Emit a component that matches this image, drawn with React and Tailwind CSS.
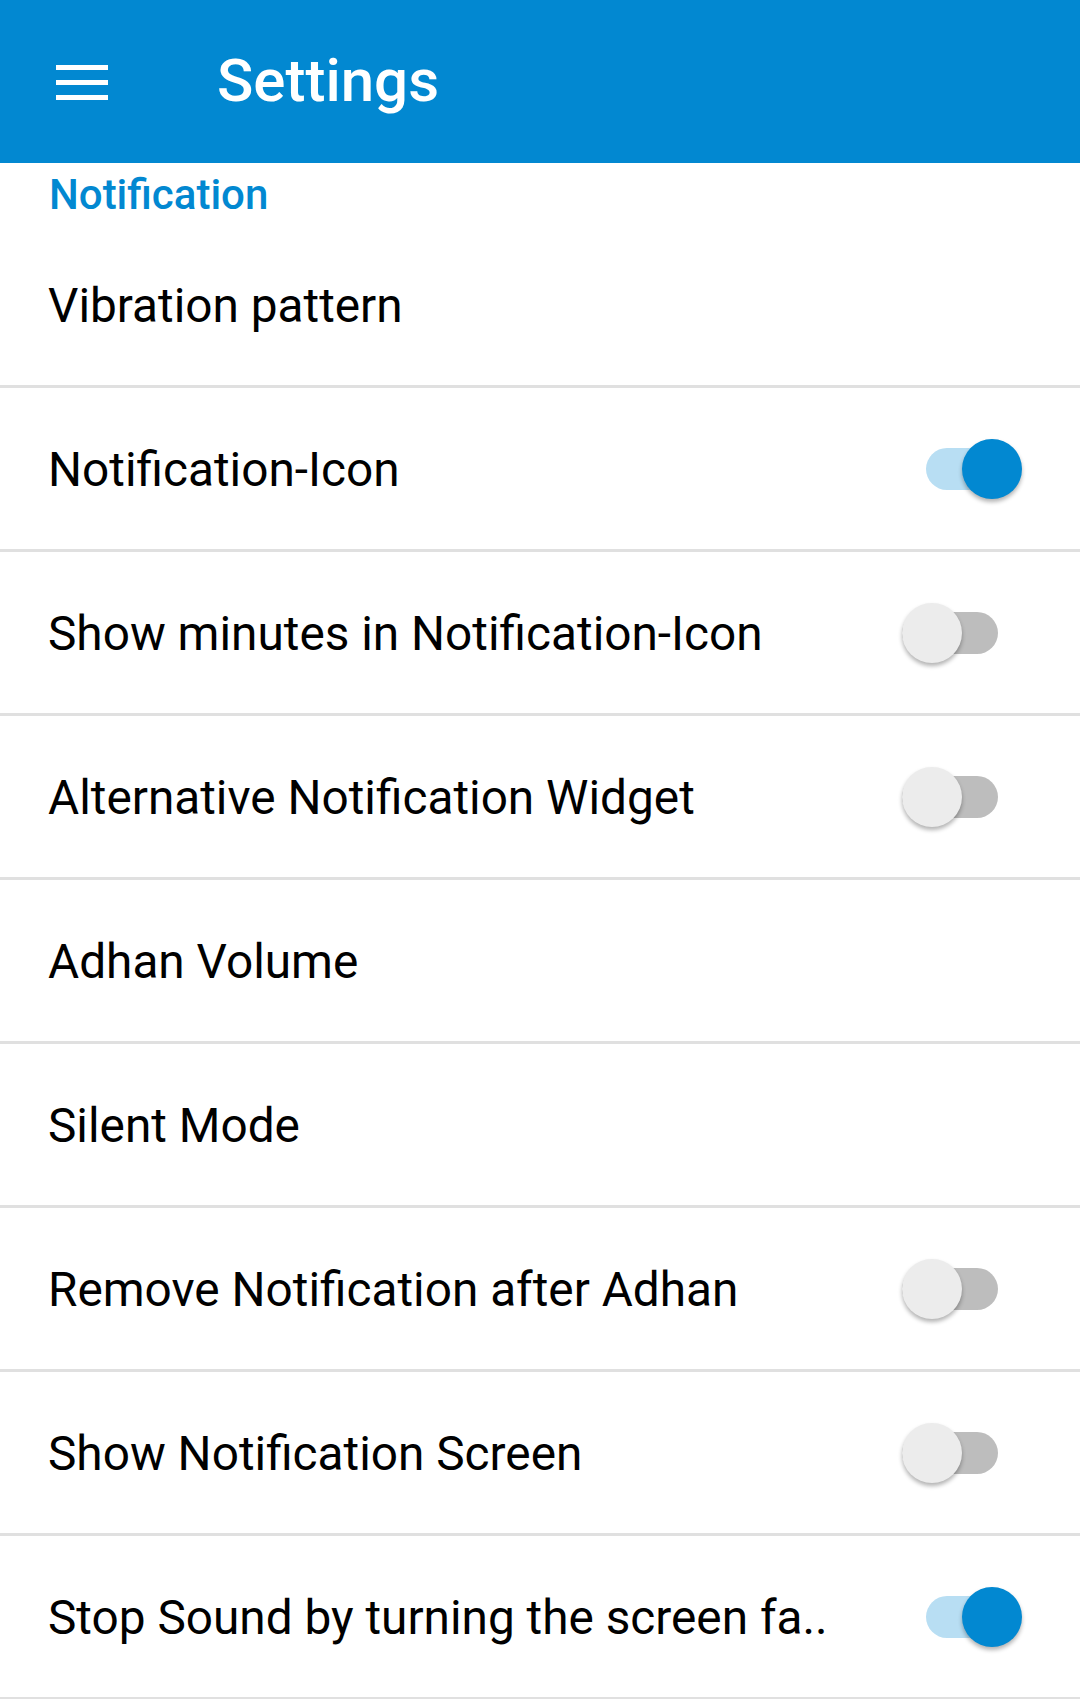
const rows = [
  { label: 'Vibration pattern' },
  { label: 'Notification-Icon', toggle: true, on: true },
  { label: 'Show minutes in Notification-Icon', toggle: true, on: false },
  { label: 'Alternative Notification Widget', toggle: true, on: false },
  { label: 'Adhan Volume' },
  { label: 'Silent Mode' },
  { label: 'Remove Notification after Adhan', toggle: true, on: false },
  { label: 'Show Notification Screen', toggle: true, on: false },
  { label: 'Stop Sound by turning the screen fa..', toggle: true, on: true },
];

function Toggle({ on }) {
  // Android switch: track + thumb overlapping, on-state sits further right
  return (
    <div className="relative w-[126px] h-[60px] shrink-0 mr-[58px]">
      {on ? (
        <>
          <div className="absolute left-[30px] top-[9px] w-[94px] h-[42px] rounded-full bg-[#b8def3]" />
          <div className="absolute left-[66px] top-0 w-[60px] h-[60px] rounded-full bg-[#0288d1] shadow-[0_3px_4px_rgba(0,0,0,0.3)]" />
        </>
      ) : (
        <>
          <div className="absolute left-[6px] top-[9px] w-[96px] h-[42px] rounded-full bg-[#bdbdbd]" />
          <div className="absolute left-[6px] top-0 w-[60px] h-[60px] rounded-full bg-[#ececec] shadow-[0_3px_4px_rgba(0,0,0,0.3)]" />
        </>
      )}
    </div>
  );
}

function Row({ label, toggle, on }) {
  return (
    <div className="h-[164px] flex items-center justify-between border-b-[3px] border-[#e0e0e0] pl-[48px]">
      <span className="text-[47.75px] leading-none text-black whitespace-nowrap mt-[4px]">{label}</span>
      {toggle && <Toggle on={on} />}
    </div>
  );
}

export default function App() {
  return (
    <div className="w-[1080px] h-[1699px] overflow-hidden bg-white font-['Roboto',sans-serif]">
      <header className="h-[163px] bg-[#0288d1] flex items-center">
        <div className="ml-[56px] w-[52px] flex flex-col gap-[10px] mt-[2px]">
          <div className="h-[5px] bg-white" />
          <div className="h-[5px] bg-white" />
          <div className="h-[5px] bg-white" />
        </div>
        <h1 className="ml-[109px] text-[60px] font-medium text-white leading-none mb-[2px]">Settings</h1>
      </header>
      <div className="h-[61px] flex items-center pl-[49px]">
        <span className="text-[42px] font-medium text-[#0288d1] leading-none mt-[2px]">Notification</span>
      </div>
      {rows.map((r) => (
        <Row key={r.label} {...r} />
      ))}
    </div>
  );
}
